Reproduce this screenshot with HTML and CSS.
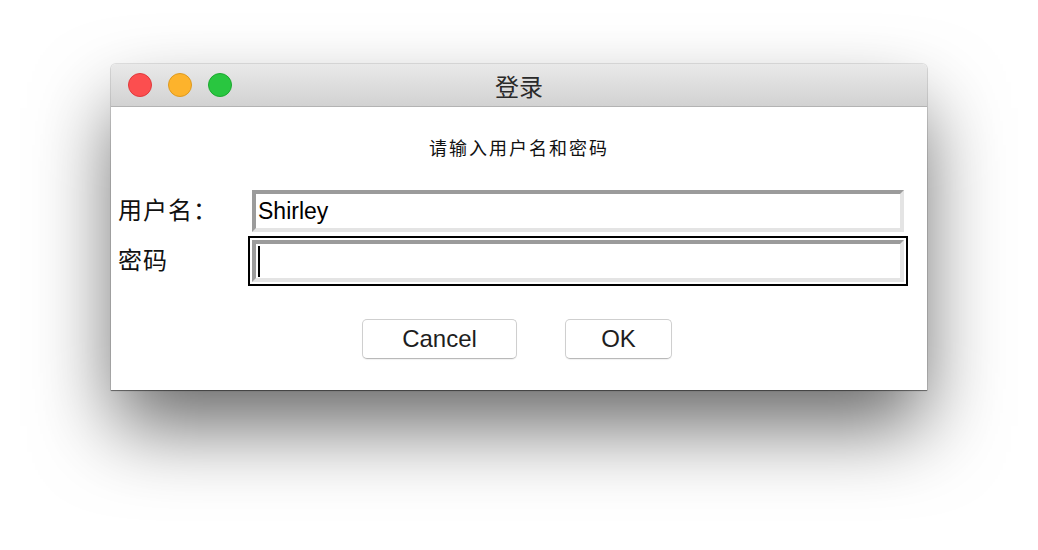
FILE: index.html
```html
<!DOCTYPE html>
<html lang="zh-CN">
<head>
<meta charset="utf-8">
<title>登录</title>
<link rel="stylesheet" href="styles.css">
</head>
<body>
<div class="window">
  <div class="titlebar">
    <div class="lights">
      <span class="light red"></span>
      <span class="light yellow"></span>
      <span class="light green"></span>
    </div>
    <div class="title">登录</div>
  </div>
  <div class="content">
    <div class="prompt">请输入用户名和密码</div>
    <div class="form">
      <div class="row">
        <label class="label">用户名：</label>
        <div class="frame">
          <div class="field">Shirley</div>
        </div>
      </div>
      <div class="row">
        <label class="label">密码</label>
        <div class="frame focused">
          <div class="field"><span class="caret"></span></div>
        </div>
      </div>
    </div>
    <div class="buttons">
      <button class="btn cancel">Cancel</button>
      <button class="btn ok">OK</button>
    </div>
  </div>
</div>
</body>
</html>
```
FILE: styles.css
```css
html, body {
  margin: 0;
  padding: 0;
  background: #ffffff;
}
body {
  width: 1038px;
  height: 550px;
  overflow: hidden;
  font-family: "Liberation Sans", "Noto Sans CJK SC", sans-serif;
  color: #111;
}
.window {
  margin: 64px 0 0 111px;
  width: 816px;
  height: 326px;
  background: #fff;
  border-radius: 5px 5px 0 0;
  box-shadow: 0 0 0 1px rgba(0,0,0,0.1), 0 1px 1px rgba(0,0,0,0.45), 0 40px 80px -4px rgba(0,0,0,0.6);
  display: flex;
  flex-direction: column;
}
.titlebar {
  height: 42px;
  flex: none;
  border-bottom: 1px solid #b3b3b3;
  border-radius: 5px 5px 0 0;
  background: linear-gradient(#e9e9e9, #d2d2d2);
  display: flex;
  align-items: center;
  position: relative;
}
.lights {
  display: flex;
  gap: 16px;
  padding-left: 17px;
}
.light {
  width: 22px;
  height: 22px;
  border-radius: 50%;
  display: block;
}
.red { background: #fc4e4f; border: 1px solid #e0393c; }
.yellow { background: #fdb32c; border: 1px solid #de9a1f; }
.green { background: #29c640; border: 1px solid #1ca92f; }
.title {
  position: absolute;
  left: 0;
  right: 0;
  top: 0;
  bottom: 0;
  display: flex;
  align-items: center;
  justify-content: center;
  font-family: "Noto Sans CJK SC", sans-serif;
  font-size: 24px;
  color: #2a2a2a;
  pointer-events: none;
}
.content {
  flex: 1;
  display: flex;
  flex-direction: column;
}
.prompt {
  font-family: "Noto Sans CJK SC", sans-serif;
  font-size: 18px;
  letter-spacing: 2px;
  text-align: center;
  margin-top: 27px;
  height: 26px;
  line-height: 26px;
  color: #111;
}
.form {
  margin-top: 26px;
  padding-left: 7px;
  display: flex;
  flex-direction: column;
}
.row {
  display: flex;
  align-items: center;
}
.label {
  width: 130px;
  font-family: "Noto Sans CJK SC", sans-serif;
  font-size: 24px;
  letter-spacing: 1px;
  color: #111;
  position: relative;
  top: -3px;
}
.frame {
  box-sizing: border-box;
  width: 660px;
  height: 50px;
  border: 2px solid transparent;
  padding: 2px;
}
.frame.focused {
  border-color: #000;
}
.field {
  box-sizing: border-box;
  height: 42px;
  border-style: solid;
  border-width: 4px;
  border-color: #9b9b9b #e4e4e4 #e4e4e4 #9b9b9b;
  background: #fff;
  padding-left: 2px;
  font-size: 23px;
  line-height: 33px;
  color: #000;
  display: flex;
  align-items: center;
}
.caret {
  display: block;
  width: 2px;
  height: 31px;
  background: #000;
}
.buttons {
  display: flex;
  justify-content: center;
  gap: 48px;
  margin-top: 33px;
  padding-right: 4px;
}
.btn {
  box-sizing: border-box;
  height: 40px;
  border: 1px solid #cfcfcf;
  border-bottom-color: #b9b9b9;
  border-radius: 5px;
  background: #fff;
  box-shadow: 0 1px 1px rgba(0,0,0,0.06);
  font-family: "Liberation Sans", sans-serif;
  font-size: 24px;
  color: #1e1e1e;
  padding: 0;
}
.cancel { width: 155px; }
.ok { width: 107px; }
```
